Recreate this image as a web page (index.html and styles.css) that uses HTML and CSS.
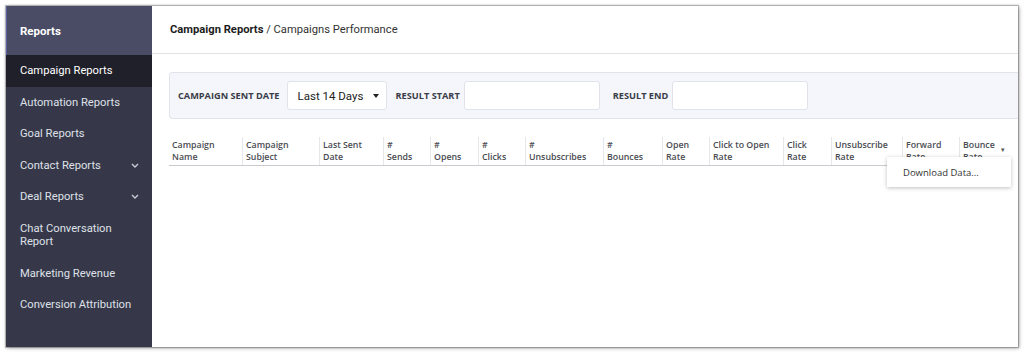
FILE: index.html
```html
<!DOCTYPE html>
<html lang="en">
<head>
<meta charset="utf-8">
<title>Campaigns Performance</title>
<link rel="stylesheet" href="styles.css">
</head>
<body>
<div class="window">
  <aside class="sidebar">
    <div class="side-head">Reports</div>
    <nav class="side-nav">
      <div class="side-item active">Campaign Reports</div>
      <div class="side-item">Automation Reports</div>
      <div class="side-item">Goal Reports</div>
      <div class="side-item has-sub">Contact Reports
        <svg class="chev" width="8" height="5" viewBox="0 0 8 5"><path d="M1 1 L4 4 L7 1" fill="none" stroke="#c9cbd6" stroke-width="1.4"/></svg>
      </div>
      <div class="side-item has-sub">Deal Reports
        <svg class="chev" width="8" height="5" viewBox="0 0 8 5"><path d="M1 1 L4 4 L7 1" fill="none" stroke="#c9cbd6" stroke-width="1.4"/></svg>
      </div>
      <div class="side-item">Chat Conversation<br>Report</div>
      <div class="side-item">Marketing Revenue</div>
      <div class="side-item">Conversion Attribution</div>
    </nav>
  </aside>
  <main class="main">
    <header class="main-head"><b>Campaign Reports</b> / Campaigns Performance</header>
    <div class="content">
      <div class="filters">
        <span class="flabel">Campaign Sent Date</span>
        <div class="select">Last 14 Days <span class="caret"></span></div>
        <span class="flabel gap">Result Start</span>
        <div class="input"></div>
        <span class="flabel gap2">Result End</span>
        <div class="input"></div>
      </div>
      <div class="table-wrap">
        <div class="thead">
          <div class="th" style="width:73px">Campaign<br>Name</div>
          <div class="th" style="width:77px">Campaign<br>Subject</div>
          <div class="th" style="width:64px">Last Sent<br>Date</div>
          <div class="th" style="width:47px">#<br>Sends</div>
          <div class="th" style="width:48px">#<br>Opens</div>
          <div class="th" style="width:47px">#<br>Clicks</div>
          <div class="th" style="width:78px">#<br>Unsubscribes</div>
          <div class="th" style="width:59px">#<br>Bounces</div>
          <div class="th" style="width:47px">Open<br>Rate</div>
          <div class="th" style="width:74px">Click to Open<br>Rate</div>
          <div class="th" style="width:48px">Click<br>Rate</div>
          <div class="th" style="width:71px">Unsubscribe<br>Rate</div>
          <div class="th" style="width:57px">Forward<br>Rate</div>
          <div class="th" style="width:52px">Bounce<br>Rate</div>
        </div>
        <span class="tcaret">&#9662;</span>
        <div class="menu">Download Data...</div>
      </div>
    </div>
  </main>
</div>
</body>
</html>
```
FILE: styles.css
```css
* { box-sizing: border-box; }
html, body { margin: 0; padding: 0; background: #ffffff; }
body { width: 1024px; height: 354px; overflow: hidden; font-family: Roboto, "Noto Sans", sans-serif; }

.window {
  margin: 6px 0 0 6px;
  width: 1012px;
  height: 341px;
  display: flex;
  overflow: hidden;
  background: #fff;
  box-shadow: 0 0 1px 1px rgba(0,0,0,0.25), 1px 1px 4px rgba(0,0,0,0.35);
}

.sidebar {
  width: 146px;
  flex: none;
  background: #363849;
  color: #e6e7ee;
  display: flex;
  flex-direction: column;
}
.side-head {
  height: 49px;
  background: #4a4c66;
  color: #fff;
  font-weight: 700;
  font-size: 11.5px;
  padding-left: 13px;
  display: flex;
  align-items: center;
  border-left: 1px solid #5a5fa0;
}
.side-item {
  padding: 9px 14px;
  font-size: 11.2px;
  line-height: 13.5px;
  color: #dfe0e8;
  position: relative;
}
.side-item.active { background: #1f2029; color: #fff; }
.side-item.has-sub { display: flex; justify-content: space-between; align-items: center; }
.chev { margin-right: -1px; }

.main {
  flex: 1;
  min-width: 0;
  display: flex;
  flex-direction: column;
  color: #222;
}
.main-head {
  height: 48px;
  flex: none;
  border-bottom: 1px solid #e1e2e6;
  display: flex;
  align-items: center;
  padding-left: 18px;
  font-size: 11.2px;
  color: #333;
  white-space: pre;
}
.main-head b { color: #1d1d1d; font-weight: 700; }

.content {
  padding: 18px 0 0 17px;
  width: 900px;
}
.filters {
  width: 860px;
  height: 47px;
  background: #f4f6fb;
  border: 1px solid #dfe3ec;
  border-radius: 3px;
  display: flex;
  align-items: center;
  padding-left: 8px;
}
.flabel {
  font-family: "Open Sans", sans-serif;
  font-weight: 700;
  font-size: 9.2px;
  text-transform: uppercase;
  color: #3a3d48;
  margin-right: 7px;
}
.flabel.gap { margin-left: 9px; margin-right: 4px; }
.flabel.gap2 { margin-left: 13px; margin-right: 4px; }
.select {
  width: 100px;
  height: 29px;
  background: #fff;
  border: 1px solid #e0e3ea;
  border-radius: 3px;
  display: flex;
  align-items: center;
  justify-content: space-between;
  padding: 0 7px 0 10px;
  font-size: 11.5px;
  color: #222;
}
.caret {
  width: 0; height: 0;
  border-left: 3.5px solid transparent;
  border-right: 3.5px solid transparent;
  border-top: 4px solid #222;
}
.input {
  width: 136px;
  height: 29px;
  background: #fff;
  border: 1px solid #e0e3ea;
  border-radius: 3px;
}

.table-wrap {
  position: relative;
  margin-top: 18px;
  width: 842px;
}
.thead {
  display: flex;
  border-bottom: 1px solid #c9cbd0;
}
.th {
  flex: none;
  height: 28px;
  padding: 2px 3px 0;
  font-family: "Open Sans", sans-serif;
  font-weight: 600;
  font-size: 8.8px;
  line-height: 12px;
  color: #4a4c52;
  border-left: 1px solid #e6e7ea;
  white-space: nowrap;
  overflow: hidden;
}
.th:first-child { border-left: none; }
.tcaret {
  position: absolute;
  left: 832px;
  top: 9px;
  font-size: 7px;
  color: #555;
}
.menu {
  position: absolute;
  left: 718px;
  top: 20px;
  width: 124px;
  height: 30px;
  background: #fff;
  box-shadow: 0 1px 4px rgba(0,0,0,0.25);
  font-family: "Open Sans", sans-serif;
  font-size: 9.5px;
  color: #333;
  padding-left: 16px;
  display: flex;
  align-items: center;
}
```
